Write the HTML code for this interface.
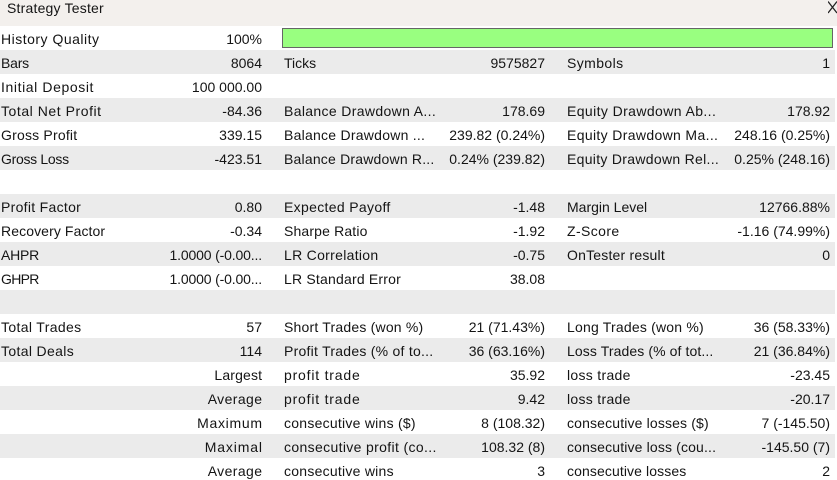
<!DOCTYPE html>
<html><head><meta charset="utf-8">
<style>
html,body{margin:0;padding:0;width:837px;height:480px;overflow:hidden;background:#fff}
body{position:relative;font:14px/24px "Liberation Sans",sans-serif;color:#141414}
#title{position:absolute;left:0;top:0;width:837px;height:26px;background:#f3f0ed}
#title span{position:absolute;left:7px;top:-4px;line-height:24px;letter-spacing:.2px}
#x{position:absolute;left:828px;top:1px}
.r{position:absolute;left:0;width:835px;height:24px}
.g{background:#ebebeb}
.r span{position:absolute;top:1px;white-space:nowrap}
.a{left:1px}.b{right:573px}.c{left:284px}.d{right:290px}.e{left:567px}.f{right:5px}
#bar{position:absolute;left:282px;top:28px;width:549px;height:18px;background:#99ff80;border:1px solid #666}
</style></head><body>
<div id="title"><span>Strategy Tester</span>
<svg id="x" width="9" height="13" viewBox="0 0 9 13"><path d="M0 .5L9 12M9 .5L0 12" stroke="#222" stroke-width="1.3" fill="none"/></svg></div>
<div class="r" style="top:26px"><span class="a" style="letter-spacing:.5px">History Quality</span><span class="b">100%</span></div>
<div id="bar"></div>
<div class="r g" style="top:50px"><span class="a" style="letter-spacing:-.2px">Bars</span><span class="b">8064</span><span class="c">Ticks</span><span class="d">9575827</span><span class="e" style="letter-spacing:.4px">Symbols</span><span class="f">1</span></div>
<div class="r" style="top:74px"><span class="a" style="letter-spacing:.6px">Initial Deposit</span><span class="b">100 000.00</span></div>
<div class="r g" style="top:98px"><span class="a" style="letter-spacing:.55px">Total Net Profit</span><span class="b">-84.36</span><span class="c" style="letter-spacing:.35px">Balance Drawdown A...</span><span class="d">178.69</span><span class="e" style="letter-spacing:.4px">Equity Drawdown Ab...</span><span class="f">178.92</span></div>
<div class="r" style="top:122px"><span class="a" style="letter-spacing:.2px">Gross Profit</span><span class="b">339.15</span><span class="c" style="letter-spacing:.25px">Balance Drawdown ...</span><span class="d">239.82 (0.24%)</span><span class="e" style="letter-spacing:.35px">Equity Drawdown Ma...</span><span class="f">248.16 (0.25%)</span></div>
<div class="r g" style="top:146px"><span class="a" style="letter-spacing:-.3px">Gross Loss</span><span class="b">-423.51</span><span class="c" style="letter-spacing:.2px">Balance Drawdown R...</span><span class="d">0.24% (239.82)</span><span class="e" style="letter-spacing:.3px">Equity Drawdown Rel...</span><span class="f">0.25% (248.16)</span></div>
<div class="r g" style="top:194px"><span class="a" style="letter-spacing:.3px">Profit Factor</span><span class="b">0.80</span><span class="c" style="letter-spacing:.33px">Expected Payoff</span><span class="d">-1.48</span><span class="e">Margin Level</span><span class="f">12766.88%</span></div>
<div class="r" style="top:218px"><span class="a" style="letter-spacing:.1px">Recovery Factor</span><span class="b">-0.34</span><span class="c" style="letter-spacing:.15px">Sharpe Ratio</span><span class="d">-1.92</span><span class="e" style="letter-spacing:.4px">Z-Score</span><span class="f">-1.16 (74.99%)</span></div>
<div class="r g" style="top:242px"><span class="a" style="letter-spacing:-.2px">AHPR</span><span class="b" style="letter-spacing:-.15px">1.0000 (-0.00...</span><span class="c" style="letter-spacing:.3px">LR Correlation</span><span class="d">-0.75</span><span class="e" style="letter-spacing:.2px">OnTester result</span><span class="f">0</span></div>
<div class="r" style="top:266px"><span class="a" style="letter-spacing:-.7px">GHPR</span><span class="b" style="letter-spacing:-.15px">1.0000 (-0.00...</span><span class="c" style="letter-spacing:.2px">LR Standard Error</span><span class="d">38.08</span></div>
<div class="r g" style="top:290px"></div>
<div class="r" style="top:314px"><span class="a" style="letter-spacing:.35px">Total Trades</span><span class="b">57</span><span class="c" style="letter-spacing:.2px">Short Trades (won %)</span><span class="d">21 (71.43%)</span><span class="e" style="letter-spacing:.2px">Long Trades (won %)</span><span class="f">36 (58.33%)</span></div>
<div class="r g" style="top:338px"><span class="a" style="letter-spacing:.35px">Total Deals</span><span class="b">114</span><span class="c" style="letter-spacing:.25px">Profit Trades (% of to...</span><span class="d">36 (63.16%)</span><span class="e" style="letter-spacing:.1px">Loss Trades (% of tot...</span><span class="f">21 (36.84%)</span></div>
<div class="r" style="top:362px"><span class="b" style="letter-spacing:.15px;margin-right:-.15px">Largest</span><span class="c" style="letter-spacing:.8px">profit trade</span><span class="d">35.92</span><span class="e" style="letter-spacing:.3px">loss trade</span><span class="f">-23.45</span></div>
<div class="r g" style="top:386px"><span class="b" style="letter-spacing:.4px;margin-right:-.4px">Average</span><span class="c" style="letter-spacing:.8px">profit trade</span><span class="d">9.42</span><span class="e" style="letter-spacing:.3px">loss trade</span><span class="f">-20.17</span></div>
<div class="r" style="top:410px"><span class="b" style="letter-spacing:.7px;margin-right:-.7px">Maximum</span><span class="c" style="letter-spacing:.25px">consecutive wins ($)</span><span class="d">8 (108.32)</span><span class="e" style="letter-spacing:.15px">consecutive losses ($)</span><span class="f">7 (-145.50)</span></div>
<div class="r g" style="top:434px"><span class="b" style="letter-spacing:.85px;margin-right:-.85px">Maximal</span><span class="c" style="letter-spacing:.35px">consecutive profit (co...</span><span class="d">108.32 (8)</span><span class="e" style="letter-spacing:.15px">consecutive loss (cou...</span><span class="f">-145.50 (7)</span></div>
<div class="r" style="top:458px"><span class="b" style="letter-spacing:.4px;margin-right:-.4px">Average</span><span class="c" style="letter-spacing:.25px">consecutive wins</span><span class="d">3</span><span class="e" style="letter-spacing:.1px">consecutive losses</span><span class="f">2</span></div>
</body></html>
